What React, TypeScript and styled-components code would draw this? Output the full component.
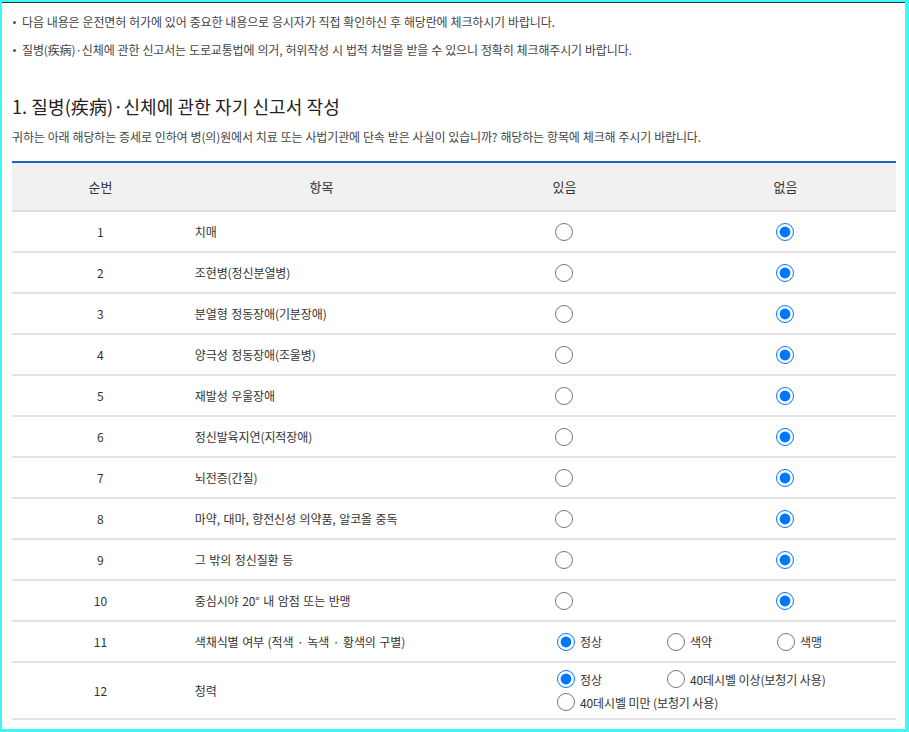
import React from 'react';
import styled, { createGlobalStyle } from 'styled-components';

const GlobalStyle = createGlobalStyle`
  html, body {
    margin: 0;
    padding: 0;
    background-color: #ffffff;
  }
  body {
    font-family: 'Noto Sans CJK KR', 'Noto Sans', sans-serif;
    color: #333333;
  }
`
const Frame = styled.div`
  box-sizing: border-box;
  width: 909px;
  height: 732px;
  border-style: solid;
  border-color: #3cf8f6;
  border-width: 2px 4px 3px 2px;
  overflow: hidden;
`
const Inner = styled.div`
  height: 100%;
  box-sizing: border-box;
  border-top: 1px solid #333333;
  padding: 5px 9px 0 10px;
`
const NoticeList = styled.ul`
  list-style: none;
  margin: 0;
  padding: 0;
`
const NoticeItem = styled.li`
  position: relative;
  padding-left: 10px;
  font-size: 12px;
  line-height: 28px;
  letter-spacing: -0.15px;
  word-spacing: 0.5px;
  color: #444444;
  &::before {
    content: '';
    position: absolute;
    left: 1px;
    top: 13px;
    width: 3px;
    height: 3px;
    border-radius: 50%;
    background-color: #555555;
  }
`
const Title = styled.h2`
  margin: 29px 0 0 0;
  font-size: 18px;
  font-weight: 400;
  line-height: 26px;
  letter-spacing: 0.1px;
  color: #222222;
`
const Description = styled.p`
  margin: 9px 0 0 0;
  font-size: 12px;
  line-height: 18px;
  letter-spacing: -0.15px;
  word-spacing: 0.5px;
  color: #444444;
`
const Table = styled.table`
  width: 884px;
  margin-top: 15px;
  border-collapse: collapse;
  table-layout: fixed;
  border-top: 2px solid #2463c2;
`
const HeadCell = styled.th`
  height: 47px;
  padding: 0;
  background-color: #f1f1f1;
  border-bottom: 2px solid #dddddd;
  font-size: 13px;
  font-weight: 400;
  color: #333333;
  text-align: center;
`
const Row = styled.tr<{ tall?: boolean }>`
  height: ${(props) => (props.tall ? '57px' : '41px')};
  border-bottom: 2px solid #e3e3e3;
`
const NumCell = styled.td`
  padding: 0;
  text-align: center;
  font-size: 12px;
  color: #333333;
`
const ItemCell = styled.td`
  padding: 0 0 0 6px;
  font-size: 12px;
  letter-spacing: -0.1px;
  word-spacing: 1px;
  color: #333333;
`
const RadioCell = styled.td`
  padding: 0;
  text-align: center;
  line-height: 0;
`
const OptionCell = styled.td`
  padding: 4px 0 4px 103px;
`
const OptionGroup = styled.div`
  display: flex;
  flex-wrap: wrap;
  align-items: center;
  row-gap: 5px;
`
const Option = styled.label`
  display: flex;
  align-items: center;
  gap: 5px;
  min-width: 110px;
  height: 18px;
  font-size: 12px;
  letter-spacing: -0.1px;
  color: #333333;
  white-space: nowrap;
`
const Radio = styled.input`
  width: 18px;
  height: 18px;
  margin: 0;
  accent-color: #0075ff;
`

type Condition = {
  no: number;
  name: string;
}

const conditions: Condition[] = [
  { no: 1, name: '치매' },
  { no: 2, name: '조현병(정신분열병)' },
  { no: 3, name: '분열형 정동장애(기분장애)' },
  { no: 4, name: '양극성 정동장애(조울병)' },
  { no: 5, name: '재발성 우울장애' },
  { no: 6, name: '정신발육지연(지적장애)' },
  { no: 7, name: '뇌전증(간질)' },
  { no: 8, name: '마약, 대마, 향전신성 의약품, 알코올 중독' },
  { no: 9, name: '그 밖의 정신질환 등' },
  { no: 10, name: '중심시야 20° 내 암점 또는 반맹' },
]

type Choice = {
  no: number;
  name: string;
  options: string[];
  tall?: boolean;
}

const choices: Choice[] = [
  { no: 11, name: '색채식별 여부 (적색 · 녹색 · 황색의 구별)', options: ['정상', '색약', '색맹'] },
  { no: 12, name: '청력', options: ['정상', '40데시벨 이상(보청기 사용)', '40데시벨 미만 (보청기 사용)'], tall: true },
]

export default function App() {
  return (
    <>
      <GlobalStyle />
      <Frame>
        <Inner>
          <NoticeList>
            <NoticeItem>다음 내용은 운전면허 허가에 있어 중요한 내용으로 응시자가 직접 확인하신 후 해당란에 체크하시기 바랍니다.</NoticeItem>
            <NoticeItem>질병(疾病)·신체에 관한 신고서는 도로교통법에 의거, 허위작성 시 법적 처벌을 받을 수 있으니 정확히 체크해주시기 바랍니다.</NoticeItem>
          </NoticeList>
          <Title>1. 질병(疾病)·신체에 관한 자기 신고서 작성</Title>
          <Description>
            귀하는 아래 해당하는 증세로 인하여 병(의)원에서 치료 또는 사법기관에 단속 받은 사실이 있습니까? 해당하는 항목에 체크해 주시기 바랍니다.
          </Description>
          <Table>
            <colgroup>
              <col style={{ width: '20%' }} />
              <col style={{ width: '30%' }} />
              <col style={{ width: '25%' }} />
              <col style={{ width: '25%' }} />
            </colgroup>
            <thead>
              <tr>
                <HeadCell>순번</HeadCell>
                <HeadCell>항목</HeadCell>
                <HeadCell>있음</HeadCell>
                <HeadCell>없음</HeadCell>
              </tr>
            </thead>
            <tbody>
              {
                // 있음 / 없음 항목
                conditions.map((value) => (
                  <Row key={`condition-${value.no}`}>
                    <NumCell>{value.no}</NumCell>
                    <ItemCell>{value.name}</ItemCell>
                    <RadioCell>
                      <Radio type='radio' name={`condition-${value.no}`} />
                    </RadioCell>
                    <RadioCell>
                      <Radio type='radio' name={`condition-${value.no}`} defaultChecked />
                    </RadioCell>
                  </Row>
                ))
              }
              {
                // 선택형 항목
                choices.map((value) => (
                  <Row key={`choice-${value.no}`} tall={value.tall}>
                    <NumCell>{value.no}</NumCell>
                    <ItemCell>{value.name}</ItemCell>
                    <OptionCell colSpan={2}>
                      <OptionGroup>
                        {value.options.map((option, index) => (
                          <Option key={`choice-${value.no}-${option}`}>
                            <Radio type='radio' name={`choice-${value.no}`} defaultChecked={index === 0} />
                            {option}
                          </Option>
                        ))}
                      </OptionGroup>
                    </OptionCell>
                  </Row>
                ))
              }
            </tbody>
          </Table>
        </Inner>
      </Frame>
    </>
  );
}
